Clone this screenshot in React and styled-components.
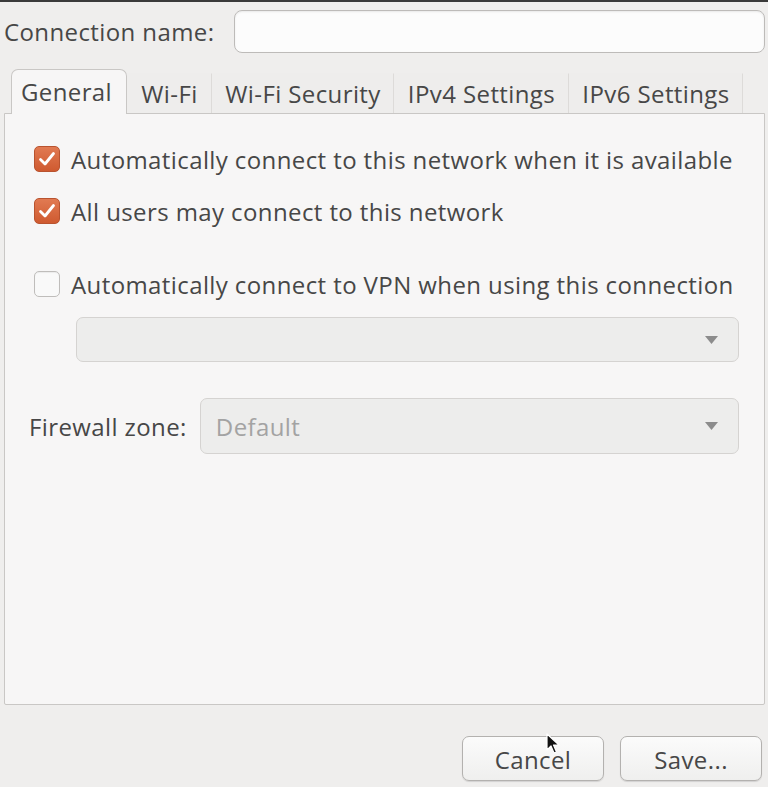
import React from 'react';
import styled, { createGlobalStyle } from 'styled-components';

const Global = createGlobalStyle`
  html, body {
    margin: 0;
    padding: 0;
    background: #efeeed;
  }
  body {
    font-family: "Open Sans", "Liberation Sans", sans-serif;
    color: #474747;
    letter-spacing: 0.4px;
  }
`;

const Window = styled.div`
  position: relative;
  width: 768px;
  height: 787px;
  box-sizing: border-box;
  border-top: 2px solid #3a3a3a;
  padding: 7px 3px 0 4px;
  display: flex;
  flex-direction: column;
`;

const NameRow = styled.div`
  display: flex;
  align-items: center;
  gap: 20px;
  height: 45px;
`;

const Label = styled.span`
  font-size: 24px;
  color: #474747;
  white-space: nowrap;
`;

const TextInput = styled.div`
  flex: 1;
  height: 43px;
  box-sizing: border-box;
  background: #fcfcfc;
  border: 1px solid #bdbbb9;
  border-radius: 8px;
  box-shadow: inset 0 1px 2px rgba(0, 0, 0, 0.08);
`;

const TabBar = styled.div`
  display: flex;
  align-items: flex-end;
  margin-top: 14px;
  padding-left: 7px;
  height: 45px;
`;

const Tab = styled.div`
  width: ${p => p.$width}px;
  height: ${p => (p.$active ? '45px' : '40px')};
  box-sizing: border-box;
  display: flex;
  align-items: center;
  justify-content: center;
  padding-bottom: ${p => (p.$active ? '2px' : '0')};
  padding-right: ${p => (p.$active ? '5px' : '0')};
  font-size: 24px;
  color: #474747;
  white-space: nowrap;
  background: ${p => (p.$active ? '#f7f6f6' : '#eeedec')};
  border: 1px solid ${p => (p.$active ? '#c9c7c5' : 'transparent')};
  border-bottom: none;
  border-right: 1px solid ${p => (p.$active ? '#c9c7c5' : '#dddbd9')};
  border-radius: ${p => (p.$active ? '7px 7px 0 0' : '0')};
  margin-bottom: ${p => (p.$active ? '-1px' : '0')};
  position: relative;
  z-index: ${p => (p.$active ? 1 : 0)};
`;

const Panel = styled.div`
  height: 592px;
  box-sizing: border-box;
  background: #f7f6f6;
  border: 1px solid #c9c7c5;
  border-radius: 0 0 2px 2px;
  padding: 31px 25px 0 29px;
  display: flex;
  flex-direction: column;
`;

const CheckRow = styled.label`
  display: flex;
  align-items: center;
  gap: 11px;
  height: 28px;
  margin-top: ${p => p.$gap || 0}px;
  font-size: 24px;
  color: #474747;
  white-space: nowrap;
`;

const Box = styled.span`
  flex: none;
  width: 26px;
  height: 26px;
  box-sizing: border-box;
  border-radius: 5px;
  display: flex;
  align-items: center;
  justify-content: center;
  background: ${p => (p.$checked ? 'linear-gradient(#e17a52, #cf5a30)' : '#f9f9f9')};
  border: 1px solid ${p => (p.$checked ? '#b9532f' : '#bfbdbb')};
  box-shadow: ${p => (p.$checked ? 'none' : 'inset 0 1px 1px rgba(0,0,0,0.06)')};
`;

const Select = styled.div`
  height: ${p => p.$height}px;
  flex: 1;
  box-sizing: border-box;
  background: #ededec;
  border: 1px solid #d5d3d1;
  border-radius: 7px;
  display: flex;
  align-items: center;
  justify-content: space-between;
  padding: 0 20px 0 15px;
  font-size: 24px;
  color: #a3a3a3;
`;

const Indented = styled.div`
  display: flex;
  margin: 19px 0 0 42px;
`;

const FieldRow = styled.div`
  display: flex;
  align-items: center;
  gap: 13px;
  margin: 36px 0 0 -5px;
`;

const Footer = styled.div`
  display: flex;
  justify-content: flex-end;
  gap: 16px;
  margin-top: 31px;
  padding-right: 3px;
`;

const Button = styled.div`
  width: 142px;
  height: 45px;
  box-sizing: border-box;
  display: flex;
  align-items: center;
  justify-content: center;
  padding-top: 2px;
  font-size: 24px;
  color: #474747;
  background: linear-gradient(#fbfbfb, #efefee);
  border: 1px solid #b3b1af;
  border-radius: 7px;
  box-shadow: 0 1px 1px rgba(0, 0, 0, 0.12);
`;

const Cursor = styled.svg`
  position: absolute;
  left: 546px;
  top: 731px;
`;

const Check = () => (
  <svg width="18" height="16" viewBox="0 0 18 16">
    <path d="M2.5 8.5 L7 13 L15.5 2.5" fill="none" stroke="#ffffff" strokeWidth="2.8" strokeLinecap="round" strokeLinejoin="round" />
  </svg>
);

const Arrow = () => (
  <svg width="13" height="8" viewBox="0 0 13 8">
    <path d="M0 0 H13 L6.5 8 Z" fill="#8c8c8c" />
  </svg>
);

const tabs = [
  { name: 'General', width: 116, active: true },
  { name: 'Wi-Fi', width: 85 },
  { name: 'Wi-Fi Security', width: 182 },
  { name: 'IPv4 Settings', width: 175 },
  { name: 'IPv6 Settings', width: 174 },
];

export default function App() {
  return (
    <Window>
      <Global />
      <NameRow>
        <Label>Connection name:</Label>
        <TextInput />
      </NameRow>
      <TabBar>
        {tabs.map(t => (
          <Tab key={t.name} $active={t.active} $width={t.width}>{t.name}</Tab>
        ))}
      </TabBar>
      <Panel>
        <CheckRow>
          <Box $checked><Check /></Box>
          Automatically connect to this network when it is available
        </CheckRow>
        <CheckRow $gap={24}>
          <Box $checked><Check /></Box>
          All users may connect to this network
        </CheckRow>
        <CheckRow $gap={45}>
          <Box />
          Automatically connect to VPN when using this connection
        </CheckRow>
        <Indented>
          <Select $height={45}><span /><Arrow /></Select>
        </Indented>
        <FieldRow>
          <Label>Firewall zone:</Label>
          <Select $height={56}><span>Default</span><Arrow /></Select>
        </FieldRow>
      </Panel>
      <Footer>
        <Button>Cancel</Button>
        <Button>Save...</Button>
      </Footer>
      <Cursor width="14" height="22" viewBox="0 0 14 22">
        <path d="M1 1 V17 L5 13 L8 20 L10.5 19 L7.5 12 H13 Z" fill="#111" stroke="#fff" strokeWidth="1.2" strokeLinejoin="round" />
      </Cursor>
    </Window>
  );
}
